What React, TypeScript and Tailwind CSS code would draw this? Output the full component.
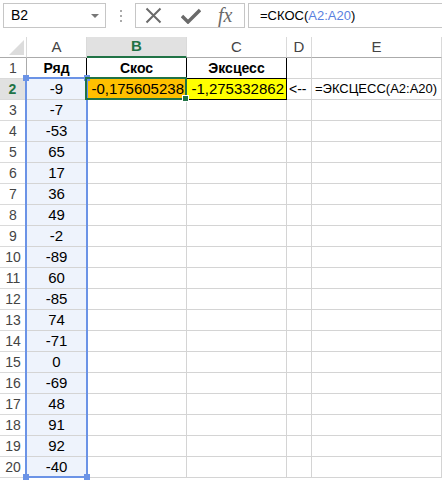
import React from "react";

const values = ["-9", "-7", "-53", "65", "17", "36", "49", "-2", "-89", "60", "-85", "74", "-71", "0", "-69", "48", "91", "92", "-40"];

const cell = "h-[21px] border-r border-b border-[#d4d4d4] flex items-center overflow-visible whitespace-nowrap";
const rowHead = "h-[21px] border-r border-b border-r-[#ababab] border-b-[#dadada] flex items-center justify-center text-[14px] text-[#444]";
const colHead = "h-[21px] border-r border-b border-r-[#dadada] border-b-[#ababab] flex items-center justify-center text-[15px] text-[#444]";

export default function App() {
  return (
    <div className="w-[442px] h-[481px] bg-white overflow-hidden font-['Liberation_Sans',Arial,sans-serif] text-black">
      {/* formula bar */}
      <div className="h-[37px] flex items-start pt-[3px] pl-[3px]">
        <div className="w-[103px] h-[25px] border border-[#c6c6c6] flex items-center justify-between pl-[7px] pr-[6px] text-[14px]">
          <span>B2</span>
          <span className="w-0 h-0 border-l-[4px] border-r-[4px] border-t-[4px] border-l-transparent border-r-transparent border-t-[#777]" />
        </div>
        <div className="w-[29px] h-[25px] flex flex-col items-center justify-center gap-[3px]">
          <span className="w-[2px] h-[2px] bg-[#aaa]" />
          <span className="w-[2px] h-[2px] bg-[#aaa]" />
          <span className="w-[2px] h-[2px] bg-[#aaa]" />
        </div>
        <div className="w-[110px] h-[25px] border border-[#c6c6c6] flex items-center pl-[9px]">
          <svg width="17" height="17" viewBox="0 0 17 17" className="mr-[19px]">
            <path d="M1.5 1.5 L15.5 15.5 M15.5 1.5 L1.5 15.5" stroke="#6a6a6a" strokeWidth="2" fill="none" />
          </svg>
          <svg width="20" height="16" viewBox="0 0 20 16" className="mr-[17px]">
            <path d="M1 8 L7 14 L19 2" stroke="#6a6a6a" strokeWidth="3.4" fill="none" />
          </svg>
          <span className="font-['Liberation_Serif',serif] italic text-[20px] leading-none text-[#6a6a6a] -mt-[2px]">fx</span>
        </div>
        <div className="flex-1 h-[25px] ml-[3px] border border-[#c6c6c6] border-r-0 flex items-center pl-[11px] text-[13px]">
          =СКОС(<span className="text-[#5a7fe0]">A2:A20</span>)
        </div>
      </div>

      {/* grid */}
      <div className="relative">
        <div className="grid grid-cols-[27px_60px_100px_100px_25px_1fr]">
          <div className="h-[21px] border-r border-b border-r-[#dadada] border-b-[#ababab] flex items-end justify-end pr-[2px] pb-[2px]">
            <svg width="15" height="15" viewBox="0 0 15 15">
              <path d="M15 0 L15 15 L0 15 Z" fill="#dcdcdc" />
            </svg>
          </div>
          <div className={colHead}>A</div>
          <div className="h-[21px] border-r border-r-[#dadada] bg-[#e1e1e1] border-b-2 border-b-[#217346] flex items-center justify-center text-[15px] font-bold text-[#217346]">B</div>
          <div className={colHead}>C</div>
          <div className={colHead}>D</div>
          <div className={colHead}>E</div>

          {/* row 1 */}
          <div className={rowHead}>1</div>
          <div className={`${cell} border-r-black justify-center font-bold text-[14px]`}>Ряд</div>
          <div className={`${cell} border-black justify-center font-bold text-[14px]`}>Скос</div>
          <div className={`${cell} border-black justify-center font-bold text-[14px]`}>Эксцесс</div>
          <div className={cell} />
          <div className={cell} />

          {/* row 2 */}
          <div className="h-[21px] border-r-2 border-r-[#217346] border-b border-b-[#dadada] bg-[#e1e1e1] flex items-center justify-center text-[14px] font-bold text-[#217346]">2</div>
          <div className={`${cell} bg-[#eef3fc] justify-center text-[15px]`}>-9</div>
          <div className={`${cell} border-black bg-[#ffc000] justify-end pr-[2px] text-[15px]`}>-0,175605238</div>
          <div className={`${cell} border-black bg-[#ffff00] justify-end pr-[2px] text-[15px]`}>-1,275332862</div>
          <div className={`${cell} pl-[2px] text-[14px]`}>&lt;--</div>
          <div className={`${cell} pl-[3px] text-[13px]`}>=ЭКСЦЕСС(A2:A20)</div>

          {values.slice(1).map((v, i) => (
            <React.Fragment key={i}>
              <div className={rowHead}>{i + 3}</div>
              <div className={`${cell} bg-[#eef3fc] justify-center text-[15px]`}>{v}</div>
              <div className={cell} />
              <div className={cell} />
              <div className={cell} />
              <div className={cell} />
            </React.Fragment>
          ))}
        </div>

        {/* reference highlight A2:A20 */}
        <div className="absolute left-[25px] top-[40px] w-[63px] h-[401px] border-2 border-[#6b93e6] pointer-events-none">
          <span className="absolute -left-[4px] -top-[4px] w-[6px] h-[6px] bg-[#6b93e6]" />
          <span className="absolute -right-[4px] -top-[4px] w-[6px] h-[6px] bg-[#6b93e6]" />
          <span className="absolute -left-[4px] -bottom-[4px] w-[6px] h-[6px] bg-[#6b93e6]" />
          <span className="absolute -right-[4px] -bottom-[4px] w-[6px] h-[6px] bg-[#6b93e6]" />
        </div>

        {/* active cell B2 */}
        <div className="absolute left-[85px] top-[40px] w-[102px] h-[23px] border-2 border-[#217346] pointer-events-none">
          <span className="absolute -right-[4px] -bottom-[4px] w-[7px] h-[7px] bg-[#217346] border border-white" />
        </div>
      </div>
    </div>
  );
}
